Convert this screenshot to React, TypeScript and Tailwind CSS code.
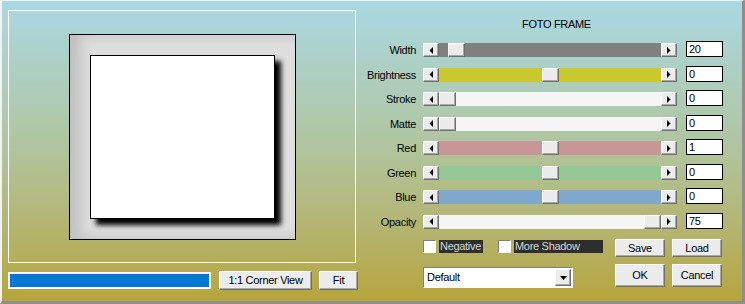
import React from 'react';

const bevel = 'border border-t-white border-l-white border-r-[#6f6f6f] border-b-[#6f6f6f] shadow-[inset_-1px_-1px_0_#a8a8a8] bg-[#ececec]';

function Arrow({ dir }: { dir: 'left' | 'right' }) {
  return (
    <div className={`flex h-full w-[16px] items-center justify-center ${bevel}`}>
      <svg width="4" height="7" viewBox="0 0 4 7">
        {dir === 'left' ? <polygon points="4,0 4,7 0.5,3.5" fill="#000" /> : <polygon points="0,0 0,7 3.5,3.5" fill="#000" />}
      </svg>
    </div>
  );
}

function Slider({ track, thumb }: { track: string; thumb: number }) {
  return (
    <div className="flex h-[14px] w-[254px]">
      <Arrow dir="left" />
      <div className={`relative flex-1 ${track}`}>
        <div className={`absolute top-0 h-full w-[17px] ${bevel}`} style={{ left: thumb }} />
      </div>
      <Arrow dir="right" />
    </div>
  );
}

const rows = [
  { label: 'Width', track: 'bg-[#808080]', thumb: 9, value: '20' },
  { label: 'Brightness', track: 'bg-[#c9c92e]', thumb: 103, value: '0' },
  { label: 'Stroke', track: 'bg-[#f5f5f5]', thumb: 0, value: '0' },
  { label: 'Matte', track: 'bg-[#f5f5f5]', thumb: 0, value: '0' },
  { label: 'Red', track: 'bg-[#c89696]', thumb: 103, value: '1' },
  { label: 'Green', track: 'bg-[#96c896]', thumb: 103, value: '0' },
  { label: 'Blue', track: 'bg-[#80a8cc]', thumb: 103, value: '0' },
  { label: 'Opacity', track: 'bg-[#f5f5f5]', thumb: 205, value: '75' },
];

function Check({ label, width }: { label: string; width: string }) {
  return (
    <div className="flex items-center">
      <div className="h-[13px] w-[13px] border border-t-[#808080] border-l-[#808080] border-b-white border-r-white bg-white" />
      <div className={`ml-[3px] h-[13px] ${width} bg-[#2e2e2e] pl-[1px] leading-[13px] text-[#d6d6d6]`}>{label}</div>
    </div>
  );
}

function Btn({ children, className }: { children: React.ReactNode; className: string }) {
  return <div className={`flex items-center justify-center ${bevel} ${className}`}>{children}</div>;
}

export default function App() {
  return (
    <div className="flex h-[304px] w-[745px] border-t border-l-2 border-t-[#f2f2f2] border-l-[#f2f2f2] border-r-[3px] border-b-[3px] border-r-[#8e8e8e] border-b-[#8e8e8e] bg-gradient-to-b from-[#aad8e2] via-[#b0c49c] to-[#b6a53a] font-['Liberation_Sans',Arial,sans-serif] text-[11px] tracking-[-0.3px] text-black">
      <div className="w-[358px] pl-[6px] pt-[9px]">
        <div className="flex h-[253px] w-[348px] items-center justify-center border border-white">
          <div className="flex h-[206px] w-[227px] border border-black bg-[#dedede] p-[20px] shadow-[inset_10px_0_14px_rgba(0,0,0,0.14)]">
            <div className="flex-1 border border-black bg-white shadow-[6px_6px_5px_rgba(0,0,0,1)]" />
          </div>
        </div>
        <div className="mt-[8px] flex items-center">
          <div className="h-[17px] w-[203px] border-2 border-white bg-[#0078d7]" />
          <Btn className="ml-[8px] h-[19px] w-[93px]">1:1 Corner View</Btn>
          <Btn className="ml-[7px] h-[19px] w-[39px]">Fit</Btn>
        </div>
      </div>
      <div className="flex-1 pt-[17px]">
        <div className="ml-[162px] h-[13px] leading-[13px]">FOTO FRAME</div>
        <div className="mt-[7px]">
          {rows.map(r => (
            <div key={r.label} className="flex h-[24.5px] items-center">
              <div className="w-[56px] text-right">{r.label}</div>
              <div className="ml-[7px]">
                <Slider track={r.track} thumb={r.thumb} />
              </div>
              <div className="mb-[2px] ml-[9px] h-[16px] w-[37px] border border-black bg-white pl-[2px] leading-[14px]">{r.value}</div>
            </div>
          ))}
        </div>
        <div className="mt-[5px] flex">
          <div className="ml-[63px] w-[192px] pt-[1px]">
            <div className="flex">
              <Check label="Negative" width="w-[44px]" />
              <div className="ml-[15px]">
                <Check label="More Shadow" width="w-[89px]" />
              </div>
            </div>
            <div className="mt-[14px] flex h-[21px] w-[150px] items-center border border-t-[#808080] border-l-[#808080] border-b-white border-r-white bg-white pr-[1px] pl-[3px]">
              <div className="flex-1">Default</div>
              <div className={`flex h-[17px] w-[16px] items-center justify-center ${bevel}`}>
                <svg width="7" height="4" viewBox="0 0 7 4">
                  <polygon points="0,0 7,0 3.5,4" fill="#000" />
                </svg>
              </div>
            </div>
          </div>
          <div className="grid grid-cols-[50px_50px] gap-x-[7px] gap-y-[6px]">
            <Btn className="h-[18px]">Save</Btn>
            <Btn className="h-[18px]">Load</Btn>
            <Btn className="h-[23px]">OK</Btn>
            <Btn className="h-[23px]">Cancel</Btn>
          </div>
        </div>
      </div>
    </div>
  );
}
